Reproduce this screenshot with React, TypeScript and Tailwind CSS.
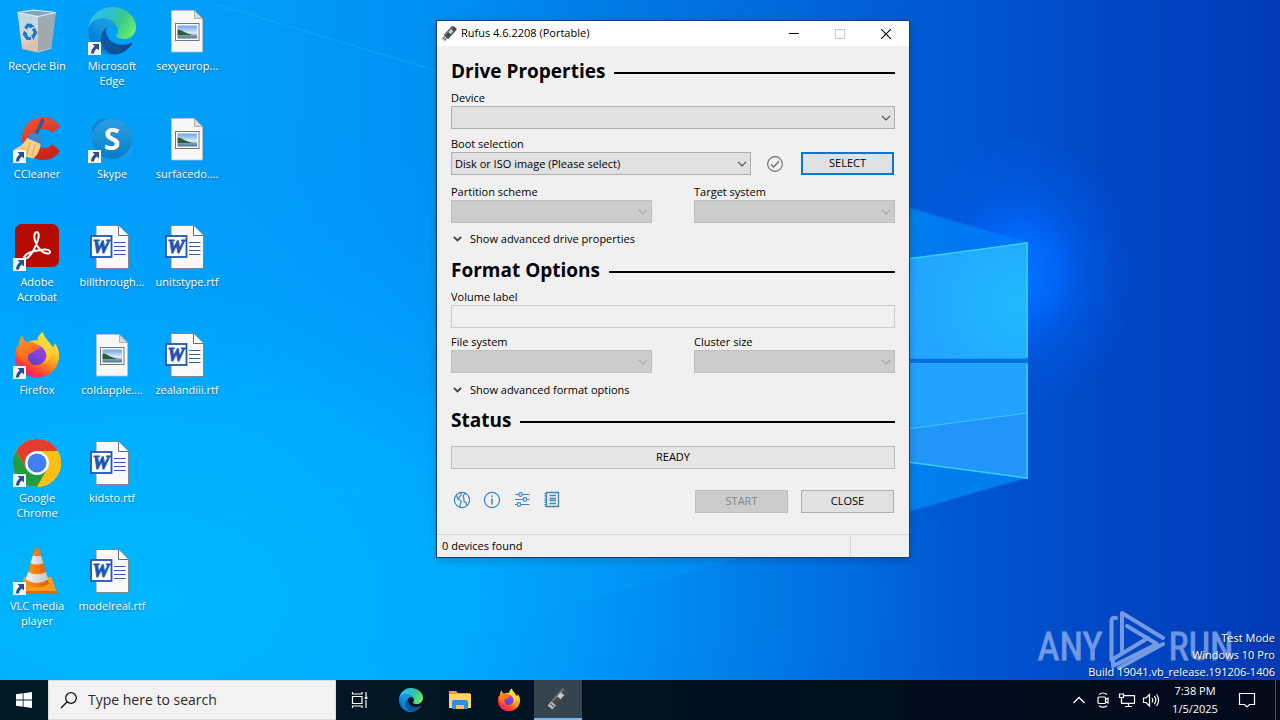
import type { ReactNode } from 'react';

function Wallpaper() {
  return (
    <svg className="absolute inset-0 h-full w-full" viewBox="0 0 1280 720" preserveAspectRatio="xMidYMid slice" aria-hidden="true">
      <defs>
        <linearGradient id="wpBase" x1="0" y1="0" x2="1" y2="0">
          <stop offset="0" stopColor="#00a2fa" />
          <stop offset=".2" stopColor="#009df6" />
          <stop offset=".34" stopColor="#0090f2" />
          <stop offset=".52" stopColor="#0074e2" />
          <stop offset=".72" stopColor="#005ad4" />
          <stop offset=".86" stopColor="#0048c6" />
          <stop offset="1" stopColor="#003ab4" />
        </linearGradient>
        <radialGradient id="wpLow" gradientUnits="userSpaceOnUse" cx="150" cy="600" r="820" gradientTransform="translate(150 600) scale(1 .6) translate(-150 -600)">
          <stop offset="0" stopColor="#00b6ff" />
          <stop offset=".35" stopColor="#00b2ff" stopOpacity=".85" />
          <stop offset="1" stopColor="#0090ff" stopOpacity="0" />
        </radialGradient>
        <radialGradient id="wpGlow" gradientUnits="userSpaceOnUse" cx="1020" cy="272" r="115" gradientTransform="translate(1020 272) scale(1 1.2) translate(-1020 -272)">
          <stop offset="0" stopColor="#0076ff" />
          <stop offset=".3" stopColor="#006aff" stopOpacity=".85" />
          <stop offset=".65" stopColor="#0060f0" stopOpacity=".35" />
          <stop offset="1" stopColor="#0060f0" stopOpacity="0" />
        </radialGradient>
        <linearGradient id="wpBeam" x1="0" y1="0" x2="1" y2="0">
          <stop offset="0" stopColor="#00a6ff" stopOpacity="0" />
          <stop offset=".5" stopColor="#00a6ff" stopOpacity=".3" />
          <stop offset="1" stopColor="#00a0ff" stopOpacity=".75" />
        </linearGradient>
        <radialGradient id="wpPane" gradientUnits="userSpaceOnUse" cx="1020" cy="305" r="170">
          <stop offset="0" stopColor="#22b9fb" />
          <stop offset=".5" stopColor="#22a8ff" />
          <stop offset="1" stopColor="#1f9dff" />
        </radialGradient>
      </defs>
      <rect width="1280" height="720" fill="url(#wpBase)" />
      <rect width="1280" height="720" fill="url(#wpLow)" />
      <polygon points="230,8 1027,242 1027,478 230,700" fill="url(#wpBeam)" opacity=".6" />
      <path d="M215 4 440 72" stroke="#3dbcff" strokeOpacity=".3" />
      <path d="M200 525 440 470" stroke="#3dbcff" strokeOpacity=".15" />
      <rect x="850" y="80" width="320" height="420" fill="url(#wpGlow)" />
      <polygon points="800,179 1027,242 1027,478 800,544" fill="#0096ff" opacity=".3" />
      <polygon points="720,287 1028,242 1028,358 720,358" fill="url(#wpPane)" />
      <polygon points="720,363 1028,363 1028,479 720,436" fill="#22a2ff" />
      <polygon points="900,430 1028,413 1028,479 900,461" fill="#2196f8" />
      <rect x="720" y="358" width="308" height="5" fill="#0071e2" />
      <path d="M900 430 1027 413" stroke="#3dc4ff" fill="none" />
      <path d="M900 260 1027 243 V357 M900 461 1027 478 V363" stroke="#35ceff" strokeWidth="1.600" fill="none" />
      <path d="M900 358.500H1027M900 363.500H1027" stroke="#2eaeff" strokeOpacity=".6" />
    </svg>
  );
}

function EdgeMark() {
  return (
    <svg viewBox="0 0 256 256" className="h-full w-full" aria-hidden="true">
      <defs>
        <linearGradient id="edgeA" x1=".1" y1=".5" x2="1" y2=".5">
          <stop offset="0" stopColor="#0c59a4" />
          <stop offset="1" stopColor="#114a8b" />
        </linearGradient>
        <linearGradient id="edgeB" x1=".8" y1=".2" x2=".2" y2="1">
          <stop offset="0" stopColor="#1b9de2" />
          <stop offset=".3" stopColor="#1595df" />
          <stop offset=".7" stopColor="#0680d7" />
          <stop offset="1" stopColor="#0078d4" />
        </linearGradient>
        <linearGradient id="edgeC" x1="0" y1=".2" x2="1" y2=".6">
          <stop offset="0" stopColor="#35c1f1" />
          <stop offset=".35" stopColor="#2cc0d8" />
          <stop offset=".65" stopColor="#36c98e" />
          <stop offset="1" stopColor="#66eb6e" />
        </linearGradient>
      </defs>
      <path transform="translate(-4.630 -4.920)" fill="url(#edgeA)" d="M235.680 195.460a93.730 93.730 0 0 1-10.540 4.710 101.870 101.870 0 0 1-35.900 6.460c-47.320 0-88.540-32.550-88.540-74.320A31.480 31.480 0 0 1 117.130 105c-42.800 1.800-53.800 46.400-53.800 72.530 0 73.880 68.090 81.370 82.760 81.370 7.910 0 19.840-2.300 27-4.560l1.310-.44a128.340 128.340 0 0 0 66.600-52.800 4 4 0 0 0-5.320-5.640Z" />
      <path fill="url(#edgeB)" d="M105.730 241.420A79.200 79.200 0 0 1 83 220.080a80.720 80.720 0 0 1 29.500-120c3.120-1.470 8.450-4.130 15.540-4a32.350 32.350 0 0 1 25.690 13 31.880 31.880 0 0 1 6.360 18.660c0-.21 24.460-79.600-80-79.600-43.900 0-80 41.660-80 78.210a130.150 130.150 0 0 0 12.110 56 128 128 0 0 0 156.380 67.110 75.550 75.550 0 0 1-62.780-8Z" />
      <path fill="url(#edgeC)" d="M152.330 148.860c-.81 1.050-3.300 2.500-3.300 5.660 0 2.610 1.700 5.120 4.720 7.230 14.380 10 41.490 8.680 41.560 8.680a59.560 59.560 0 0 0 30.270-8.350A61.380 61.380 0 0 0 256 109.200c.26-22.410-8-37.310-11.340-43.910C223.460 23.840 177.720 0 128 0A128 128 0 0 0 0 126.200c.48-36.540 36.800-66.050 80-66.050 3.500 0 23.460.34 42 10.070 16.340 8.580 24.900 18.940 30.850 29.210 6.180 10.670 7.280 24.150 7.280 29.520s-2.740 13.330-7.800 19.910Z" />
    </svg>
  );
}

function FirefoxMark() {
  return (
    <svg viewBox="0 0 48 48" className="h-full w-full" aria-hidden="true">
      <defs>
        <linearGradient id="ffBody" x1=".8" y1=".05" x2=".25" y2="1">
          <stop offset="0" stopColor="#fff14a" />
          <stop offset=".3" stopColor="#ffc928" />
          <stop offset=".55" stopColor="#ff8a16" />
          <stop offset=".8" stopColor="#ff3a3c" />
          <stop offset="1" stopColor="#e8178c" />
        </linearGradient>
        <linearGradient id="ffGlobe" x1=".7" y1="0" x2=".3" y2="1">
          <stop offset="0" stopColor="#a345f0" />
          <stop offset="1" stopColor="#5b3fc4" />
        </linearGradient>
        <linearGradient id="ffFace" x1="0" y1="0" x2=".6" y2="1">
          <stop offset="0" stopColor="#ff9a1a" />
          <stop offset="1" stopColor="#ff5a20" />
        </linearGradient>
      </defs>
      <path fill="url(#ffBody)" d="M9 4.500c.5 3 2 5.500 5 7.200 3-2 7-2.700 10.500-2.200C24.500 6 26.500 3 30 1c.6 5 4.500 7.500 7.500 12 1 1.200 1.800 2.500 2.500 3.200 1-.8 1.500-2 1.500-4.200 3.600 4 5 9.500 4.500 14.500C45 38 35.500 46.500 24 46.500 11.500 46.500 2 37 2 25c0-5 1.300-8.500 2.500-10.500.2 1.300.5 2 1 2.500C5.500 12 7 8 9 4.500z" />
      <path fill="url(#ffGlobe)" d="M23 14a10 10 0 1 1-9.500 12.500c-1-6 2-11 9.500-12.500z" />
      <path fill="#ffd83a" opacity=".75" d="M29 4c1 5 7 8 8.500 15.500 1 6-2 11-6 13 3-4 3-8 1.500-11-2-4.500-7-6-7-11 0-2.500 1.500-5 3-6.500z" />
      <path fill="url(#ffFace)" d="M9 4.500c.5 3 2 5.500 5 7.200 3.500-1.500 8-.5 10.500 3 1.500.3 2.500.8 3 1.300-.5 1.500-3.500 2-5 2.800-1 .6-1 2-2.500 2.700-1.500.7-3.500.3-4.500 2-1.200 2-1 6 2.500 8.500-6 0-11-4-12-9.500C5.500 18 6 10 9 4.500z" />
    </svg>
  );
}

function RufusMark() {
  return (
    <svg viewBox="0 0 32 32" className="h-full w-full" aria-hidden="true">
      <g transform="rotate(42 16 16)">
        <rect x="9.500" y="-2" width="12" height="27" rx="2" fill="#45484b" />
        <rect x="10.500" y="-1" width="3" height="25" rx="1.500" fill="#6c7074" />
        <rect x="11" y="25" width="9" height="8" fill="#b9bdc0" />
        <rect x="12.800" y="27" width="2" height="3" fill="#45494c" />
        <rect x="16.400" y="27" width="2" height="3" fill="#45494c" />
        <rect x="12.500" y="6" width="6.500" height="8" fill="#c9cdd0" />
      </g>
    </svg>
  );
}

function RecycleMark() {
  return (
    <svg viewBox="0 0 48 48" className="h-full w-full" aria-hidden="true">
      <defs>
        <linearGradient id="binF" x1="0" y1="0" x2=".3" y2="1">
          <stop offset="0" stopColor="#b8d4e6" />
          <stop offset=".6" stopColor="#d3d8dc" />
          <stop offset="1" stopColor="#d9c0ae" />
        </linearGradient>
      </defs>
      <path d="M4.500 5.500 25 9.500 25 45 9 41.500z" fill="url(#binF)" />
      <path d="M25 9.500 43 5.500 38.500 41 25 45z" fill="#a7b2ba" />
      <path d="M25 9.500 43 5.500 38.500 41 25 45z" fill="#8d8f93" opacity=".25" />
      <path d="M4.500 5.500 20 3l23 2.500-18 4z" fill="#7fa5bc" stroke="#e6f1f7" strokeWidth="1.200" />
      <path d="M9 41.500 25 45l13.500-4" fill="none" stroke="#e0c0a8" strokeWidth="1" />
      <g fill="none" stroke="#1579d0" strokeWidth="3.200">
        <path d="M12.500 21.500 15 18l3.500 1" />
        <path d="M20.500 21.500l2 4.500-2 2.500" />
        <path d="M18 31.500h-3.500l-3-4.500" />
      </g>
      <path d="M17 16l4.500 3.500-5 2zM23 27l-5 1 2.500 5zM9.500 28.500l1.500-5 4 3.500z" fill="#1579d0" />
    </svg>
  );
}

function CCleanerMark() {
  return (
    <svg viewBox="0 0 48 48" className="h-full w-full" aria-hidden="true">
      <defs>
        <linearGradient id="ccR" x1="0" y1="0" x2=".4" y2="1">
          <stop offset="0" stopColor="#f0563a" />
          <stop offset="1" stopColor="#c9241c" />
        </linearGradient>
      </defs>
      <path d="M47 12C43 5 37 2 30 2 18 2 9 11.500 9 23.500S18 45 30 45c7 0 13-3 17-9l-8-7c-2 2.500-4.500 4-8 4-6 0-9-4-9-9.500s3-9.500 9-9.500c3.500 0 6 1.500 8 4z" fill="url(#ccR)" />
      <path d="M29.500 5.500 22 22" stroke="#2d5f8e" strokeWidth="3.500" strokeLinecap="round" />
      <path d="M17 19c3-2 10 0 12 4l-1.500 7L13 24z" fill="#3b87c8" />
      <path d="M14 23 27.500 29C27 35 25 39 21 43c-5 1-9-2-20-9 7-2 10-6 13-11z" fill="#f6cf8c" />
      <path d="M8 32 14 36M17 27l-3 13M22 29l-3 12" stroke="#e0a85e" strokeWidth="1" />
    </svg>
  );
}

function SkypeMark() {
  return (
    <svg viewBox="0 0 48 48" className="h-full w-full" aria-hidden="true">
      <defs>
        <linearGradient id="skA" x1="0" y1="0" x2="0" y2="1">
          <stop offset="0" stopColor="#2a9fe4" />
          <stop offset="1" stopColor="#0a7cc8" />
        </linearGradient>
      </defs>
      <circle cx="16" cy="16" r="12" fill="#0f86d4" />
      <circle cx="32" cy="32" r="12.500" fill="#1a9ee6" />
      <circle cx="24" cy="24" r="20" fill="url(#skA)" />
      <text x="24" y="35" textAnchor="middle" fontFamily="Open Sans, sans-serif" fontSize="30" fontWeight="700" fill="#fff">S</text>
    </svg>
  );
}

function AcrobatMark() {
  return (
    <svg viewBox="0 0 48 48" className="h-full w-full" aria-hidden="true">
      <rect x="2" y="1" width="44" height="43" rx="7" fill="#b30b00" />
      <path d="M22.500 9.500c3-1.500 4 2 2.500 7-1.800 6-6 14-9.500 17.500-2.500 2.500-5 1.500-4-.5 1.500-3 9-5.500 15.500-6.500 4.500-.7 9.500-.5 10 1.700.4 2-3 2.500-6.500.6C26 27 22 20 21.500 15.500c-.3-3 0-5.200 1-6z" fill="none" stroke="#fff" strokeWidth="2" />
    </svg>
  );
}

function ChromeMark() {
  return (
    <svg viewBox="0 0 48 48" className="h-full w-full" aria-hidden="true">
      <circle cx="24" cy="24" r="24" fill="#fbc116" />
      <path d="M24 12H44.785A24 24 0 0 0 3.215 12L13.600 30z" fill="#e33b2e" />
      <path d="M13.600 30 3.215 12A24 24 0 0 0 24 48L34.400 30z" fill="#259b41" />
      <path d="M24 12H44.785A24 24 0 0 1 24 48L34.400 30z" fill="#fbc116" />
      <circle cx="24" cy="24" r="12" fill="#fff" />
      <circle cx="24" cy="24" r="9.500" fill="#4080ec" />
    </svg>
  );
}

function VlcMark() {
  return (
    <svg viewBox="0 0 48 48" className="h-full w-full" aria-hidden="true">
      <defs>
        <linearGradient id="vlcO" x1="0" y1="0" x2="1" y2="0">
          <stop offset="0" stopColor="#f7931e" />
          <stop offset=".5" stopColor="#f47a0c" />
          <stop offset="1" stopColor="#d65f00" />
        </linearGradient>
        <linearGradient id="vlcW" x1="0" y1="0" x2="1" y2="0">
          <stop offset="0" stopColor="#f4f4f4" />
          <stop offset="1" stopColor="#c4c4c4" />
        </linearGradient>
      </defs>
      <path d="M11 30h27.500L44 46H7z" fill="#fa9a1c" />
      <path d="M7 44h37v2.500H7z" fill="#de6d05" />
      <path d="M21.500 2.500q2.500-2.500 5 0L36 37q-12 7-24 0z" fill="url(#vlcO)" />
      <path d="M20 8.500q4 1.500 8 0L30.500 16q-6.500 3-13 0z" fill="url(#vlcW)" />
      <path d="M15 25q9 4.500 18 0l2.300 7.500q-11.300 7-22.600 0z" fill="url(#vlcW)" />
    </svg>
  );
}

function WordFileMark() {
  return (
    <svg viewBox="0 0 48 48" className="h-full w-full" aria-hidden="true">
      <path d="M8 2.500h22.500l10 10V45.500H8z" fill="#fafafa" stroke="#7d8890" />
      <path d="M30.500 2.500v10h10" fill="#fff" stroke="#5f6b75" />
      <path d="M26 19.500h11.500M26 23.500h11.500M26 27.500h11.500M26 31.500h11.500" stroke="#2f5fae" strokeWidth="1.200" />
      <rect x="3" y="13" width="20.500" height="21" fill="#fff" stroke="#1f55b3" strokeWidth="1.800" />
      <text x="13" y="29.500" textAnchor="middle" fontFamily="Liberation Serif, serif" fontSize="19" fontWeight="700" fontStyle="italic" fill="#1f55b3" stroke="#1f55b3" strokeWidth="1">W</text>
    </svg>
  );
}

function ImageFileMark() {
  return (
    <svg viewBox="0 0 48 48" className="h-full w-full" aria-hidden="true">
      <defs>
        <linearGradient id="imgSky" x1="0" y1="0" x2="0" y2="1">
          <stop offset="0" stopColor="#6aa5e0" />
          <stop offset=".6" stopColor="#dfeefa" />
          <stop offset=".75" stopColor="#7f9fb0" />
          <stop offset="1" stopColor="#4d7590" />
        </linearGradient>
      </defs>
      <path d="M8.500 3.500h23l8 8V45H8.500z" fill="#f8f7f5" stroke="#b9c2c8" strokeWidth=".8" />
      <path d="M31.500 3.500v8h8z" fill="#d8dcdf" stroke="#9aa5ad" strokeWidth=".8" />
      <rect x="12.500" y="16.500" width="23.500" height="17" fill="#fff" stroke="#6b7880" />
      <rect x="14.500" y="18.500" width="19.500" height="13" fill="url(#imgSky)" />
      <path d="M14.500 22.500c5 .5 8 4 15 5.500h-15z" fill="#2f5a3a" />
    </svg>
  );
}

function ShortcutBadge() {
  return (
    <svg viewBox="0 0 13 13" className="absolute bottom-0 left-0 h-[13px] w-[13px]" aria-hidden="true">
      <rect width="13" height="13" fill="#f6f7f8" />
      <path d="M4.500 2H11v6.500L8.900 6.400C7.200 7.600 6.400 9 6 11.500H3C3 8.500 4.400 6 6.700 4.200z" fill="#2a4f8f" />
    </svg>
  );
}

type Shortcut = { label: string; art: ReactNode; link?: boolean };

const shortcuts: Shortcut[] = [
  { label: 'Recycle Bin', art: <RecycleMark /> },
  { label: 'CCleaner', art: <CCleanerMark />, link: true },
  { label: 'Adobe Acrobat', art: <AcrobatMark />, link: true },
  { label: 'Firefox', art: <FirefoxMark />, link: true },
  { label: 'Google Chrome', art: <ChromeMark />, link: true },
  { label: 'VLC media player', art: <VlcMark />, link: true },
  { label: 'Microsoft Edge', art: <EdgeMark />, link: true },
  { label: 'Skype', art: <SkypeMark />, link: true },
  { label: 'billthrough...', art: <WordFileMark /> },
  { label: 'coldapple....', art: <ImageFileMark /> },
  { label: 'kidsto.rtf', art: <WordFileMark /> },
  { label: 'modelreal.rtf', art: <WordFileMark /> },
  { label: 'sexyeurop...', art: <ImageFileMark /> },
  { label: 'surfacedo....', art: <ImageFileMark /> },
  { label: 'unitstype.rtf', art: <WordFileMark /> },
  { label: 'zealandiii.rtf', art: <WordFileMark /> },
];

function DesktopIcons() {
  return (
    <ul className="relative grid w-max auto-cols-[74px] grid-flow-col grid-rows-[repeat(6,108px)] gap-x-px">
      {shortcuts.map((s) => (
        <li key={s.label} className="flex justify-center pt-[7px]">
          <button type="button" className="flex h-max w-full flex-col items-center gap-[3px] text-white">
            <span className="relative block h-12 w-12">
              {s.art}
              {s.link && <ShortcutBadge />}
            </span>
            <span className="px-0.5 text-center text-[11px] leading-[15px] [text-shadow:0_1px_2px_rgba(0,0,0,0.4)]">{s.label}</span>
          </button>
        </li>
      ))}
    </ul>
  );
}

function Heading({ children }: { children: ReactNode }) {
  return (
    <div className="flex h-7 items-center gap-[9px]">
      <h2 className="text-[19px] leading-7 font-bold">{children}</h2>
      <span className="mt-1 h-0.5 flex-1 bg-black" />
    </div>
  );
}

function Combo({ id, label, value = '', disabled = false, className = '' }: { id: string; label: string; value?: string; disabled?: boolean; className?: string }) {
  return (
    <div className={className}>
      <label htmlFor={id} className="block leading-[17px]">{label}</label>
      <div className="relative">
        <select
          id={id}
          disabled={disabled}
          className="block h-[23px] w-full appearance-none border border-[#adadad] bg-[#e1e1e1] pr-5 pl-[3px] text-[11px] leading-4 text-black disabled:border-[#bfbfbf] disabled:bg-[#cccccc] disabled:opacity-100"
        >
          <option>{value}</option>
        </select>
        <svg viewBox="0 0 10 6" className={`pointer-events-none absolute top-[9px] right-1 h-1.5 w-2.5 ${disabled ? 'text-[#a6a6a6]' : 'text-[#505050]'}`} aria-hidden="true">
          <path d="M1 .8 5 4.800 9 .8" fill="none" stroke="currentColor" strokeWidth="1.200" />
        </svg>
      </div>
    </div>
  );
}

function Disclosure({ children }: { children: ReactNode }) {
  return (
    <button type="button" className="flex h-5 items-center gap-2 pl-0.5">
      <svg viewBox="0 0 9 6" className="h-1.5 w-[9px]" aria-hidden="true">
        <path d="M.8 .8 4.500 4.500 8.200 .8" fill="none" stroke="#444" strokeWidth="1.800" />
      </svg>
      <span className="leading-5">{children}</span>
    </button>
  );
}

function RufusWindow() {
  return (
    <section aria-label="Rufus" className="absolute top-5 left-[436px] w-[474px] border border-[#173f7a] bg-[#f0f0f0] text-[11px] text-black shadow-[0_2px_8px_rgba(0,0,0,0.2)]">
      <header className="flex h-[25px] items-center bg-white pl-1">
        <span className="h-4 w-4"><RufusMark /></span>
        <h1 className="flex-1 pl-1">Rufus 4.6.2208 (Portable)</h1>
        <button type="button" aria-label="Minimize" className="flex h-full w-[46px] items-center justify-center">
          <span className="h-px w-2.5 bg-black" />
        </button>
        <button type="button" aria-label="Maximize" disabled className="flex h-full w-[46px] items-center justify-center">
          <span className="h-2.5 w-2.5 border border-[#c8c8c8]" />
        </button>
        <button type="button" aria-label="Close window" className="flex h-full w-[46px] items-center justify-center">
          <svg viewBox="0 0 10 10" className="h-2.5 w-2.5" aria-hidden="true"><path d="M0 0 10 10M10 0 0 10" stroke="#000" strokeWidth="1.100" /></svg>
        </button>
      </header>

      <form className="px-3.5 pt-[11px]" onSubmit={(e) => e.preventDefault()}>
        <Heading>Drive Properties</Heading>
        <Combo id="device" label="Device" className="mt-1" />
        <div className="mt-1.5 flex items-end">
          <Combo id="boot" label="Boot selection" value="Disk or ISO image (Please select)" className="w-[300px]" />
          <svg viewBox="0 0 16 16" className="mb-[3px] ml-4 h-4 w-4" fill="none" stroke="#6e6e6e" strokeWidth="1.100" aria-hidden="true">
            <circle cx="8" cy="8" r="7.400" />
            <path d="M4 8.500 6.700 11 12 5.200" strokeWidth="1.400" />
          </svg>
          <button type="button" className="mr-px ml-auto h-[23px] w-[93px] border-2 border-[#0078d7] bg-[#e1e1e1]">SELECT</button>
        </div>
        <div className="mt-2 grid grid-cols-2 gap-[42px]">
          <Combo id="scheme" label="Partition scheme" disabled />
          <Combo id="target" label="Target system" disabled />
        </div>
        <div className="mt-1.5"><Disclosure>Show advanced drive properties</Disclosure></div>

        <div className="mt-[7px]"><Heading>Format Options</Heading></div>
        <div className="mt-1">
          <label htmlFor="volume" className="block leading-[17px]">Volume label</label>
          <input id="volume" type="text" disabled className="block h-[23px] w-full border border-[#cccccc] bg-[#f0f0f0] px-1" />
        </div>
        <div className="mt-[5px] grid grid-cols-2 gap-[42px]">
          <Combo id="fs" label="File system" disabled />
          <Combo id="cluster" label="Cluster size" disabled />
        </div>
        <div className="mt-[7px]"><Disclosure>Show advanced format options</Disclosure></div>

        <div className="mt-1.5"><Heading>Status</Heading></div>
        <div role="status" className="mt-3 flex h-[23px] items-center justify-center border border-[#bcbcbc] bg-[#e6e6e6]">READY</div>

        <div className="mt-[21px] flex pr-px pb-[21px]">
          <div className="flex h-5 items-center gap-3 pl-0.5 text-[#3a86be]">
            <button type="button" aria-label="Language">
              <svg viewBox="0 0 18 18" className="h-[18px] w-[18px]" fill="none" stroke="currentColor" strokeWidth="1.200" aria-hidden="true">
                <circle cx="9" cy="9" r="7.600" />
                <path d="M3.200 4.200c1.500 1.800.5 3 2 4 1.300.8 3 .8 3 2.600 0 1.500-1.500 2-1.200 5.300M7 1.800c1.800 1 1.500 2.500.2 3.200-1.200.7-.7 2-2 2.200M12.500 2.500c-2 1-2.500 3-1.800 4.500.6 1.400 0 2.300.3 3.300.4 1.200 2 .5 2.500 1.700.3 1 0 1.700-.5 2.500" />
              </svg>
            </button>
            <button type="button" aria-label="About">
              <svg viewBox="0 0 18 18" className="h-[18px] w-[18px]" fill="none" stroke="currentColor" strokeWidth="1.200" aria-hidden="true">
                <circle cx="9" cy="9" r="7.600" />
                <path d="M9 7.500v6M9 4.500v1.600" strokeWidth="1.500" />
              </svg>
            </button>
            <button type="button" aria-label="Settings">
              <svg viewBox="0 0 18 18" className="h-[18px] w-[18px]" fill="none" stroke="currentColor" strokeWidth="1.200" aria-hidden="true">
                <path d="M2 3.500h3.500M9.500 3.500h7M2 8.500h8M14 8.500h2.500M2 13.500h2M8 13.500h8.500" />
                <circle cx="7.500" cy="3.500" r="1.800" /><circle cx="12" cy="8.500" r="1.800" /><circle cx="6" cy="13.500" r="1.800" />
              </svg>
            </button>
            <button type="button" aria-label="Log">
              <svg viewBox="0 0 18 18" className="h-[18px] w-[18px]" fill="none" stroke="currentColor" strokeWidth="1.300" aria-hidden="true">
                <path d="M3.500 1.500h12v14h-12z" />
                <path d="M6.500 4.500h6.500M6.500 7.500h6.500M6.500 9.500h6.500M6.500 12.500h6.500" />
                <path d="M2.700 2v14" strokeWidth="2.400" strokeDasharray="1.200 1" />
              </svg>
            </button>
          </div>
          <div className="ml-auto flex gap-[13px]">
            <button type="button" disabled className="h-[23px] w-[93px] border border-[#bfbfbf] bg-[#cccccc] text-[#838383]">START</button>
            <button type="button" className="h-[23px] w-[93px] border border-[#adadad] bg-[#e1e1e1]">CLOSE</button>
          </div>
        </div>
      </form>

      <footer className="flex h-[23px] items-center border-t border-[#d7d7d7] pl-[5px]">
        <span className="flex-1">0 devices found</span>
        <span className="h-full w-[59px] border-l border-[#d7d7d7]" />
      </footer>
    </section>
  );
}

function Watermark() {
  return (
    <div className="absolute right-0 bottom-0 text-white">
      <svg viewBox="0 0 200 60" className="absolute right-[45px] bottom-[10px] h-[60px] w-[200px] opacity-50" aria-label="ANY RUN" role="img">
        <g fontFamily="Liberation Sans Narrow, Roboto Condensed, Liberation Sans, sans-serif" fontSize="38" fill="#dfe8ff" stroke="#dfe8ff" strokeWidth=".8">
          <text x="35" y="50" textAnchor="middle">ANY</text>
          <text x="166" y="50" textAnchor="middle">RUN</text>
        </g>
        <g fill="none" stroke="#e8efff" strokeWidth="4" strokeLinejoin="round" strokeLinecap="round">
          <path d="M81 8c-3-.5-4.500 0-4.500 3V50" />
          <path d="M87 41V3L128 28" />
          <path d="M92 16 122 34 78 56V49L113 28" />
          <path d="M84 58 128 34" />
        </g>
      </svg>
      <p className="relative pr-[5px] text-right text-[11px] leading-[17px] whitespace-nowrap [text-shadow:1px_1px_1px_rgba(0,0,0,0.5)]">
        Test Mode<br />Windows 10 Pro<br />Build 19041.vb_release.191206-1406
      </p>
    </div>
  );
}

function Taskbar() {
  return (
    <footer className="relative flex h-10 shrink-0 items-stretch bg-linear-to-r from-[#001a26] to-[#020a1c] text-white">
      <button type="button" aria-label="Start" className="flex w-12 items-center justify-center">
        <svg viewBox="0 0 16 16" className="h-4 w-4" fill="#fff" aria-hidden="true">
          <path d="M0 2.300 6.700 1.300V7.600H0zM7.500 1.200 16 0V7.600H7.500zM0 8.400H6.700V14.700L0 13.700zM7.500 8.400H16V16L7.500 14.800z" />
        </svg>
      </button>
      <label className="flex w-72 items-center gap-2.5 border border-[#dcdcdc] bg-[#f2f2f2] pl-[11px] text-black">
        <svg viewBox="0 0 18 18" className="h-[18px] w-[18px] shrink-0" fill="none" stroke="#111" strokeWidth="1.300" aria-hidden="true">
          <circle cx="11" cy="7" r="5.300" /><path d="M7.200 10.800 1 17" />
        </svg>
        <input type="text" aria-label="Search" placeholder="Type here to search" className="w-full min-w-0 bg-transparent text-sm placeholder:text-[#2b2b2b] focus:outline-none" />
      </label>
      <button type="button" aria-label="Task view" className="flex w-12 items-center justify-center">
        <svg viewBox="0 0 18 18" className="h-[18px] w-[18px]" fill="none" stroke="#fff" strokeWidth="1.200" aria-hidden="true">
          <path d="M1.500 5.500h9.500v7H1.500zM1.500 1v2h9.500V1M1.500 17v-2h9.500v2M15 1v4M15 9v8" />
          <path d="M13.800 5.500h2.600v2.600h-2.600z" fill="#fff" stroke="none" />
        </svg>
      </button>
      <nav aria-label="Pinned apps" className="ml-[3px] flex gap-px">
        <button type="button" aria-label="Edge" className="flex w-12 items-center justify-center"><span className="h-6 w-6"><EdgeMark /></span></button>
        <button type="button" aria-label="File Explorer" className="flex w-12 items-center justify-center">
          <svg viewBox="0 0 24 24" className="h-6 w-6" aria-hidden="true">
            <path d="M1 3h7l2 2h12v4H1z" fill="#e8a317" />
            <path d="M1 6h22v14H1z" fill="#ffd75e" />
            <path d="M4 21v-7q0-2 2-2h12q2 0 2 2v7h-4v-4H8v4z" fill="#2e8fdc" />
            <path d="M8 21v-4h8v4z" fill="#f5c43c" />
          </svg>
        </button>
        <button type="button" aria-label="Firefox" className="flex w-12 items-center justify-center"><span className="h-6 w-6"><FirefoxMark /></span></button>
        <button type="button" aria-label="Rufus" className="flex w-12 items-center justify-center border-b-2 border-[#76b9ed] bg-[#35454f]"><span className="h-[22px] w-[22px]"><RufusMark /></span></button>
      </nav>

      <div className="ml-auto flex items-center">
        <div className="flex items-center gap-1.5">
          <button type="button" aria-label="Hidden icons">
            <svg viewBox="0 0 18 18" className="h-[18px] w-[18px]" fill="none" stroke="#fff" strokeWidth="1.300" aria-hidden="true"><path d="M3.500 12 9 6.500 14.500 12" /></svg>
          </button>
          <button type="button" aria-label="Meet now">
            <svg viewBox="0 0 18 18" className="h-[18px] w-[18px]" fill="none" stroke="#fff" strokeWidth="1.200" aria-hidden="true">
              <rect x="4" y="6" width="7.500" height="6.500" rx="1" /><path d="M11.500 8.500 14 7v5l-2.500-1.500M5 3.500Q9 .5 13 3.500M5 14.800Q9 17.600 13 14.800" />
            </svg>
          </button>
          <button type="button" aria-label="Network">
            <svg viewBox="0 0 18 18" className="h-[18px] w-[18px]" fill="none" stroke="#fff" strokeWidth="1.200" aria-hidden="true">
              <path d="M5.500 4.600h11v7.800H3.500V8M10.500 12.500v3M7 15.500h7" /><path d="M1.500 3h4v3.500h-4zM3.500 6.500V12" />
            </svg>
          </button>
          <button type="button" aria-label="Volume">
            <svg viewBox="0 0 18 18" className="h-[18px] w-[18px]" fill="none" stroke="#fff" strokeWidth="1.200" aria-hidden="true">
              <path d="M1.500 7v4.500H4l3.500 3.500V3.500L4 7zM10 7q1.500 2.200 0 4.500M12.300 5.200q3 4 0 8M14.600 3.500q4 5.700 0 11.500" />
            </svg>
          </button>
        </div>
        <time className="w-[70px] text-center text-[11px] leading-[18px]">7:38 PM<br />1/5/2025</time>
        <button type="button" aria-label="Notifications" className="flex w-[34px] justify-center">
          <svg viewBox="0 0 18 18" className="h-[18px] w-[18px]" fill="none" stroke="#fff" strokeWidth="1.200" aria-hidden="true">
            <path d="M1.500 2.500h15v11H11.500L9 16 6.500 13.500h-5z" />
          </svg>
        </button>
        <span className="ml-[11px] h-10 w-[5px] border-l border-[#4a5266]" />
      </div>
    </footer>
  );
}

export default function App() {
  return (
    <div className="relative flex h-screen min-h-[680px] flex-col overflow-hidden bg-[#0090f0] font-['Open_Sans','Noto_Sans',sans-serif]">
      <Wallpaper />
      <main className="relative flex-1">
        <DesktopIcons />
        <Watermark />
        <RufusWindow />
      </main>
      <Taskbar />
    </div>
  );
}
